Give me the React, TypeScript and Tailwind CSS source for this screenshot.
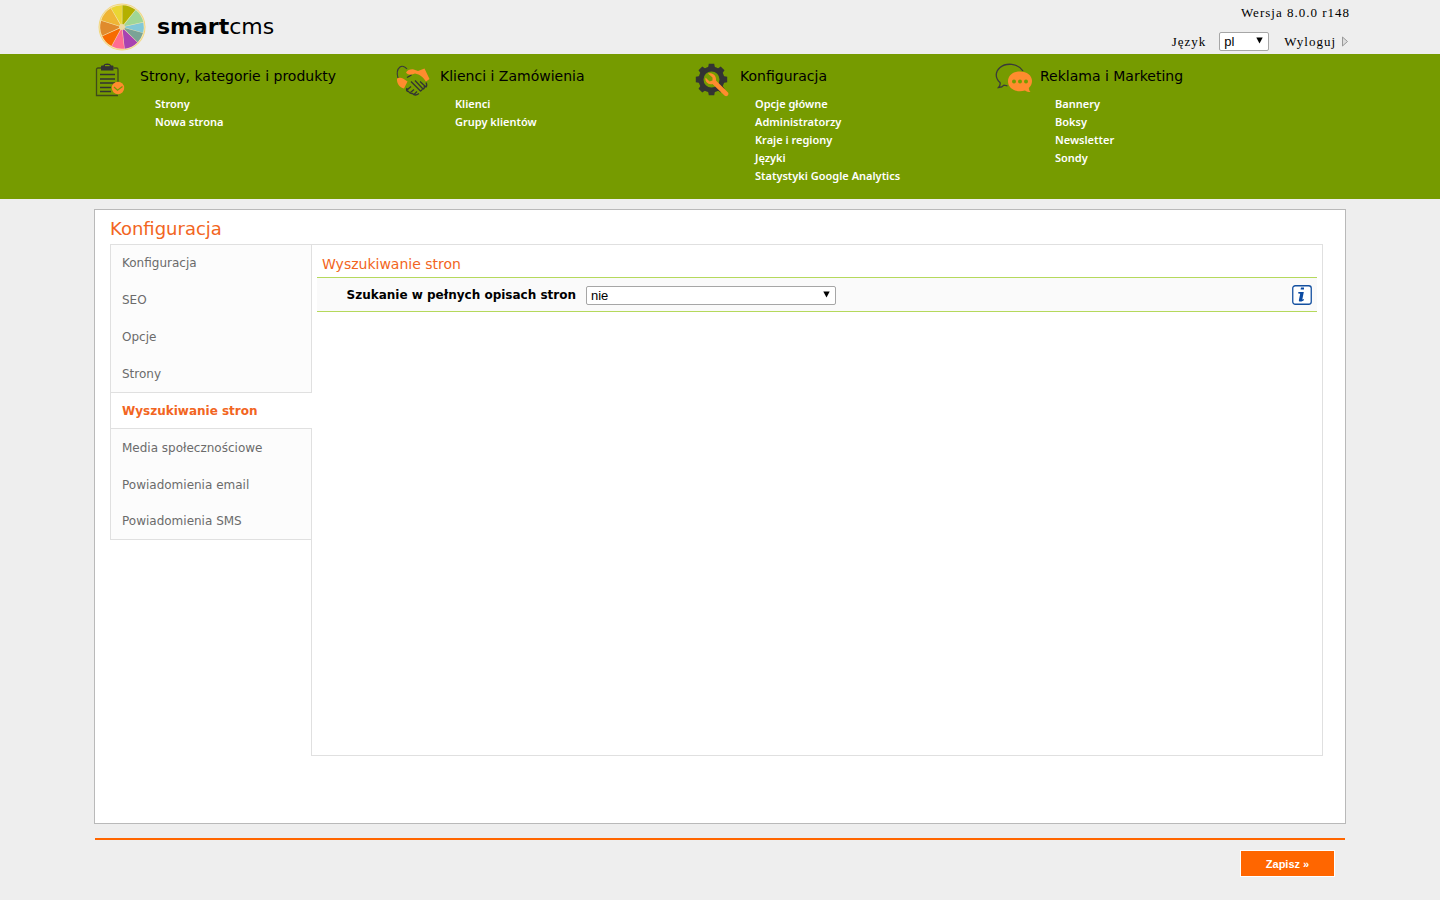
import type { ReactNode } from "react";

const slices = [
  { from: 1, to: 38, fill: "#b3b000" },
  { from: 39, to: 77, fill: "#a0d696" },
  { from: 78, to: 105, fill: "#82c8d8" },
  { from: 106, to: 134, fill: "#7aa396" },
  { from: 135, to: 173, fill: "#a843b2" },
  { from: 174, to: 208, fill: "#ff6c92" },
  { from: 209, to: 245, fill: "#f76b00" },
  { from: 246, to: 287, fill: "#e08b2d" },
  { from: 288, to: 329, fill: "#efb535" },
  { from: 330, to: 360, fill: "#ead533" },
];

const point = (deg: number, r: number) => {
  const rad = (deg * Math.PI) / 180;
  return `${24 + r * Math.sin(rad)} ${24 - r * Math.cos(rad)}`;
};

const Logo = () => (
  <svg viewBox="0 0 48 48" className="size-12" aria-hidden="true">
    <circle cx="24" cy="24" r="23.5" fill="#f3d77c" />
    <circle cx="24" cy="24" r="22.600" fill="#f4e6b8" />
    {slices.map((s) => (
      <path
        key={s.from}
        fill={s.fill}
        d={`M${point((s.from + s.to) / 2, 1)} L${point(s.from, 21.8)} A21.8 21.8 0 0 1 ${point(s.to, 21.8)} Z`}
      />
    ))}
    <circle cx="24" cy="24" r="3" fill="#ecd9a4" />
  </svg>
);

const ClipboardIcon = () => (
  <svg viewBox="0 0 36 36" className="size-9" fill="none" aria-hidden="true">
    <path d="M6 5H3Q1.500 5 1.500 6.500V32.500H23M18.500 5H21.500Q23 5 23 6.500V19" stroke="#3f4a1a" strokeWidth="1.300" />
    <path d="M6 7.500V3.500Q6 2.500 7 2.500H8.500Q9 .500 12.300 .500T16 2.500H17.500Q18.500 2.500 18.500 3.500V7.500Z" fill="#333" />
    <path d="M10 2.600h4.600" stroke="#769b00" strokeWidth="1.200" />
    <path d="M5 11.500H20M5 16H20M5 20H20M5 24.500H16M5 28.500H16" stroke="#333" strokeWidth="1.300" />
    <circle cx="23" cy="25" r="6.200" fill="#ff8c2e" />
    <path d="M19 24 22.500 27.300 27.500 23.500" stroke="#769b00" strokeWidth="1.200" />
  </svg>
);

const HandshakeIcon = () => (
  <svg viewBox="0 0 36 36" className="size-9" fill="none" aria-hidden="true">
    <path d="M12 6C10 3.500 7 2.500 5 4C2.500 6 1.500 10 3 15" stroke="#3a3a3a" strokeWidth="1.200" />
    <path
      d="M11 9.500C12.500 7 15 6 18 6.200L23 8L29.500 5.500L34.500 16L31 18.500C28 14 25 11.500 20 10.500C17 12 13 12.500 11 9.500Z"
      fill="#ff8c2e"
    />
    <path d="M2 15.500Q5 14 8 15.500L12.500 18.500L9 25.500C4.500 24.500 1.500 20.500 2 15.500Z" fill="#ff8c2e" />
    <path
      d="M12 27L16 23.500M15.500 29.500L19 26.500M19 31.500L22 28.500M16 18.500L25.500 28Q27 27.800 27 26.300M20 17.500L28 26Q30 25.500 29 23M25 18.500L31 24Q32.500 22.500 31 19.500M12 25Q10.500 28 13.500 28.500Q15 31 17.500 30.500Q20 33.500 24 30.500M12 14.500L16.500 12"
      stroke="#333"
      strokeWidth="1.300"
    />
  </svg>
);

const GearIcon = () => (
  <svg viewBox="0 0 36 36" className="size-9" fill="none" aria-hidden="true">
    <circle cx="16.500" cy="16.500" r="10.500" stroke="#333" strokeWidth="5" />
    {[0, 45, 90, 135, 180, 225, 270, 315].map((a) => (
      <path key={a} d="M13 5 13.800 .800H19.200L20 5Z" fill="#333" transform={`rotate(${a} 16.500 16.500)`} />
    ))}
    <path
      d="M13 10.500C17 9.500 21.500 12 21 17.500L33 29.500C34.500 31.500 32 34.500 29.500 32.500L17.500 21C13.500 22 9.500 19 10.500 14.500L14.500 18.500L17.500 17.500L17.500 14.500Z"
      fill="#ff8c2e"
    />
  </svg>
);

const ChatIcon = () => (
  <svg viewBox="0 0 38 36" className="h-9 w-[38px]" fill="none" aria-hidden="true">
    <path
      d="M28 8C23 0 11 -.500 5 4.500C0 9 0 15 5 19.500C5.500 21.500 5 23 3.500 24.500C6 24.500 8 23.500 9 22.200L12.500 22.800"
      stroke="#3a3a3a"
      strokeWidth="1.300"
    />
    <path
      d="M25 8.500C32 8.500 37 12.500 37 18C37 21 35.800 23.200 33.800 25C34 27 34.500 28 35.500 29C33.500 29 31.500 28.500 30 27.500C21 30 13 25.500 13 18.500C13 12.500 18 8.500 25 8.500Z"
      fill="#ff8c2e"
    />
    <circle cx="19" cy="18.500" r="2" fill="#769b00" />
    <circle cx="25" cy="18.500" r="2" fill="#769b00" />
    <circle cx="31" cy="18.500" r="2" fill="#769b00" />
  </svg>
);

const InfoIcon = () => (
  <svg viewBox="0 0 20 20" className="size-5" aria-hidden="true">
    <rect x=".75" y=".75" width="18.500" height="18.500" rx="2.500" fill="#fff" stroke="#1450a0" strokeWidth="1.300" />
    <path d="M9 2.500H12V4.500H8.600Z" fill="#0b4aa2" />
    <path d="M6.300 7H11.800L10.300 14.500 12 14 11.600 15.500 9.500 16.600H7.300L6.800 15.500 8.200 8.800 6.300 8.600Z" fill="#0b4aa2" />
  </svg>
);

const sections = [
  { title: "Strony, kategorie i produkty", icon: <ClipboardIcon />, links: ["Strony", "Nowa strona"] },
  { title: "Klienci i Zamówienia", icon: <HandshakeIcon />, links: ["Klienci", "Grupy klientów"] },
  {
    title: "Konfiguracja",
    icon: <GearIcon />,
    links: ["Opcje główne", "Administratorzy", "Kraje i regiony", "Języki", "Statystyki Google Analytics"],
  },
  { title: "Reklama i Marketing", icon: <ChatIcon />, links: ["Bannery", "Boksy", "Newsletter", "Sondy"] },
];

const tabs = [
  "Konfiguracja",
  "SEO",
  "Opcje",
  "Strony",
  "Wyszukiwanie stron",
  "Media społecznościowe",
  "Powiadomienia email",
  "Powiadomienia SMS",
];

const tabClass = (tab: string, index: number) => {
  if (tab === "Wyszukiwanie stron") {
    return "relative -mr-px border-y bg-white font-bold text-[#f26522]";
  }
  if (index === 0) return "border-t bg-[#fcfcfc] text-[#6b6b6b]";
  if (index === tabs.length - 1) return "border-b bg-[#fcfcfc] text-[#6b6b6b]";
  return "bg-[#fcfcfc] text-[#6b6b6b]";
};

const SelectBox = ({ id, className, children }: { id: string; className: string; children: ReactNode }) => (
  <div className={`relative ${className}`}>
    <select
      id={id}
      className="block h-[19px] w-full appearance-none rounded-[2px] border border-[#a6a6a6] bg-white pl-1 font-['Liberation_Sans',sans-serif] text-[13px] leading-[17px] tracking-normal text-black"
    >
      {children}
    </select>
    <svg viewBox="0 0 7 7" className="pointer-events-none absolute top-[5px] right-[6px] size-[7px]" aria-hidden="true">
      <path d="M.300 .500H6.700L3.500 6.500Z" fill="#000" />
    </svg>
  </div>
);

const App = () => {
  return (
    <div className="min-h-screen bg-[#eee] font-['DejaVu_Sans',Verdana,sans-serif] text-black">
      <header className="mx-auto flex h-[54px] max-w-[1260px] justify-between pl-2">
        <a href="#" className="flex items-center gap-[11px] text-[22px] leading-7">
          <Logo />
          <span>
            <b>smart</b>cms
          </span>
        </a>
        <div className="flex flex-col items-end gap-[10px] pt-1 font-['Liberation_Serif',serif] text-[13px] leading-[18px] tracking-[1px]">
          <span>Wersja 8.0.0 r148</span>
          <div className="flex items-center">
            <label htmlFor="lang">Język</label>
            <SelectBox id="lang" className="mr-[15px] ml-[13px] w-[50px]">
              <option>pl</option>
              <option>en</option>
            </SelectBox>
            <a href="#" className="flex items-center gap-[5px]">
              Wyloguj
              <svg viewBox="0 0 9 11" className="h-[11px] w-[9px]" aria-hidden="true">
                <path d="M1.500 1V10L6.500 5.500Z" fill="#ddd" stroke="#999" />
              </svg>
            </a>
          </div>
        </div>
      </header>

      <nav className="bg-[#769b00] pt-2 pb-[14px]">
        <div className="mx-auto grid min-h-[123px] max-w-[1250px] grid-cols-[repeat(3,24%)_1fr]">
          {sections.map((section) => (
            <div key={section.title} className="flex items-start">
              <div className="w-[45px] shrink-0 pt-px">{section.icon}</div>
              <div>
                <h2 className="pt-1 text-[14px] leading-5">{section.title}</h2>
                <ul className="pt-[9px] pl-[15px] font-['Noto_Sans',sans-serif] text-[11px] leading-[18px] font-semibold text-white">
                  {section.links.map((link) => (
                    <li key={link}>
                      <a href="#">{link}</a>
                    </li>
                  ))}
                </ul>
              </div>
            </div>
          ))}
        </div>
      </nav>

      <div className="mx-auto max-w-[1252px] pt-[10px]">
        <main className="border border-[#b9b9b9] bg-white pt-[7px] pr-[22px] pb-[67px] pl-[15px]">
          <h1 className="pb-[3px] text-[18px] leading-6 text-[#f26522]">Konfiguracja</h1>
          <div className="flex items-start">
            <ul className="w-[201px] shrink-0 border-l border-[#e0e0e0] text-[12px] leading-[18px]">
              {tabs.map((tab, index) => (
                <li key={tab} className={`flex h-[37px] items-center border-[#e0e0e0] pl-[11px] ${tabClass(tab, index)}`}>
                  <a href="#">{tab}</a>
                </li>
              ))}
            </ul>
            <form className="min-h-[512px] grow border border-[#e0e0e0] px-[5px] pt-[9px]">
              <h2 className="pb-[3px] pl-[5px] text-[14px] leading-5 text-[#f26522]">Wyszukiwanie stron</h2>
              <div className="flex items-center border-y border-[#b5d95c] bg-[#fafafa] pt-[7px] pr-[5px] pb-[6px]">
                <label htmlFor="search" className="w-[259px] text-right text-[12px] leading-[18px] font-bold">
                  Szukanie w pełnych opisach stron
                </label>
                <SelectBox id="search" className="ml-[10px] w-[250px]">
                  <option>nie</option>
                  <option>tak</option>
                </SelectBox>
                <button type="button" aria-label="Informacja" className="ml-auto">
                  <InfoIcon />
                </button>
              </div>
            </form>
          </div>
        </main>
      </div>

      <footer className="mx-auto mt-[14px] flex max-w-[1250px] justify-end border-t-2 border-[#ff6600] pt-[10px] pr-[10px] pb-5">
        <button
          type="submit"
          className="h-[27px] w-[95px] border border-white bg-[#ff6600] font-['Liberation_Sans',sans-serif] text-[11px] leading-4 font-bold text-white"
        >
          Zapisz »
        </button>
      </footer>
    </div>
  );
};

export default App;
